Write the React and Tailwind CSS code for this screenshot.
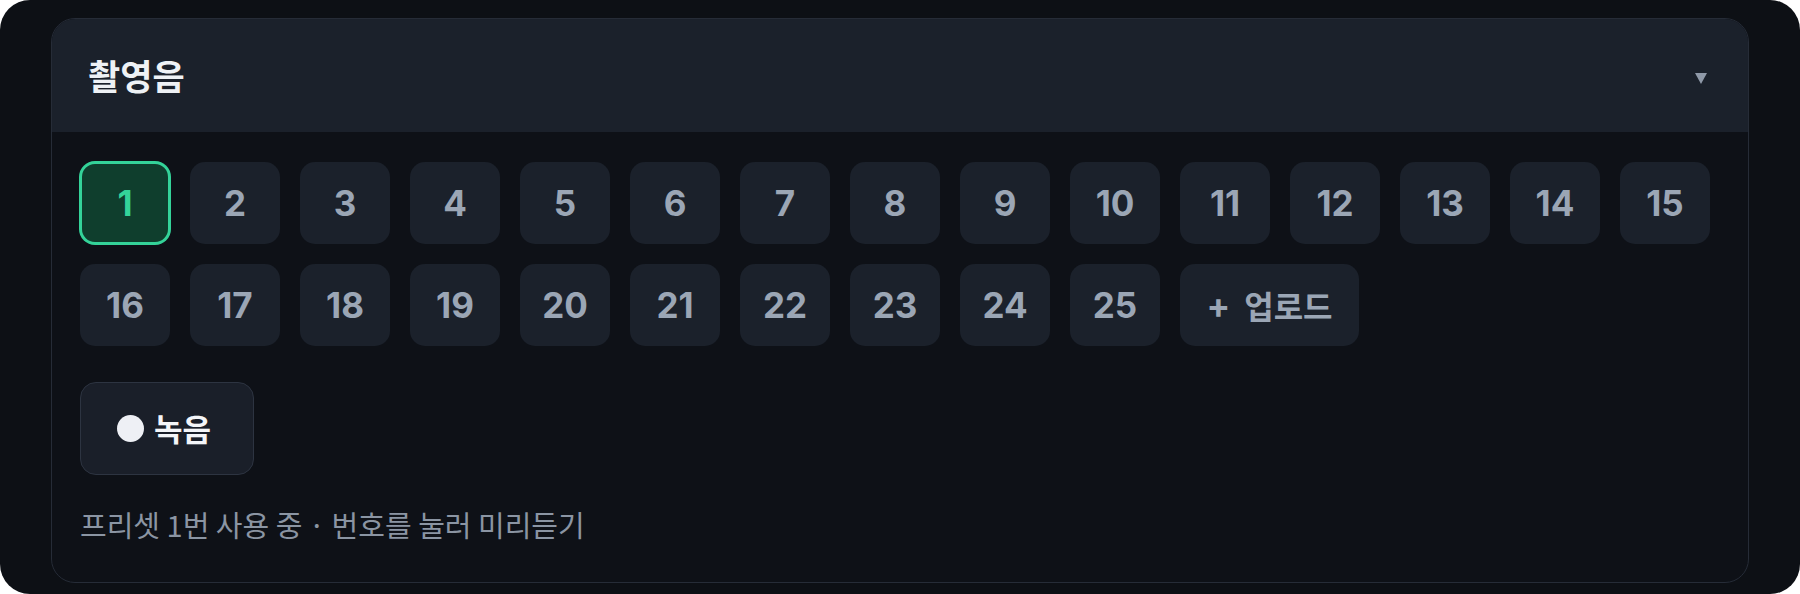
import React from "react";

const nums = Array.from({ length: 25 }, (_, i) => i + 1);

export default function App() {
  return (
    <div className="h-[594px] w-full bg-white font-[family-name:Inter,'Noto_Sans_CJK_KR',sans-serif]">
      <div className="h-full overflow-hidden rounded-[30px] bg-[#0d1015] px-[51px] pt-[18px]">
        <div className="overflow-hidden rounded-[24px] border border-[#262c37] bg-[#0e1117]">
          <div className="flex h-[113px] items-center justify-between bg-[#1b212b] pl-[36px] pr-[41px]">
            <div className="text-[35px] font-bold text-[#eef1f5] font-[family-name:'Noto_Sans_CJK_KR',sans-serif]">
              촬영음
            </div>
            <svg width="12" height="11" viewBox="0 0 12 11" className="mt-[6px]">
              <polygon points="0,0 12,0 6,11" fill="#8f99a8" />
            </svg>
          </div>
          <div className="pb-[40px] pl-[28px] pt-[30px]">
            <div className="flex flex-wrap gap-x-[20px] gap-y-[20px]">
              {nums.map((n) =>
                n === 1 ? (
                  <div
                    key={n}
                    className="flex h-[82px] w-[90px] items-center justify-center rounded-[15px] border-2 border-[#34d399] bg-[#0f3e2d] text-[35px] font-bold text-[#34d399] ring-1 ring-[#34d399]"
                  >
                    {n}
                  </div>
                ) : (
                  <div
                    key={n}
                    className="flex h-[82px] w-[90px] items-center justify-center rounded-[15px] bg-[#1b212b] text-[35px] font-bold text-[#9ba6b5]"
                  >
                    {n}
                  </div>
                )
              )}
              <div className="flex h-[82px] w-[179px] items-center justify-center gap-[14px] rounded-[15px] bg-[#1b212b] text-[#9ba6b5] font-bold">
                <span className="text-[35px]">+</span>
                <span className="text-[32px] font-[family-name:'Noto_Sans_CJK_KR',sans-serif]">업로드</span>
              </div>
            </div>
            <div className="mt-[36px] flex h-[93px] w-[174px] items-center gap-[10px] rounded-[16px] border border-[#2d3441] bg-[#1a1f29] pl-[36px]">
              <div className="h-[27px] w-[27px] rounded-full bg-[#eef0f5]" />
              <span className="text-[31px] font-bold text-[#f3f5f8] font-[family-name:'Noto_Sans_CJK_KR',sans-serif]">
                녹음
              </span>
            </div>
            <div className="mt-[31px] text-[29px] leading-[36px] text-[#8b95a3] font-[family-name:'Noto_Sans_CJK_KR',sans-serif]">
              프리셋 1번 사용 중 · 번호를 눌러 미리듣기
            </div>
          </div>
        </div>
      </div>
    </div>
  );
}
